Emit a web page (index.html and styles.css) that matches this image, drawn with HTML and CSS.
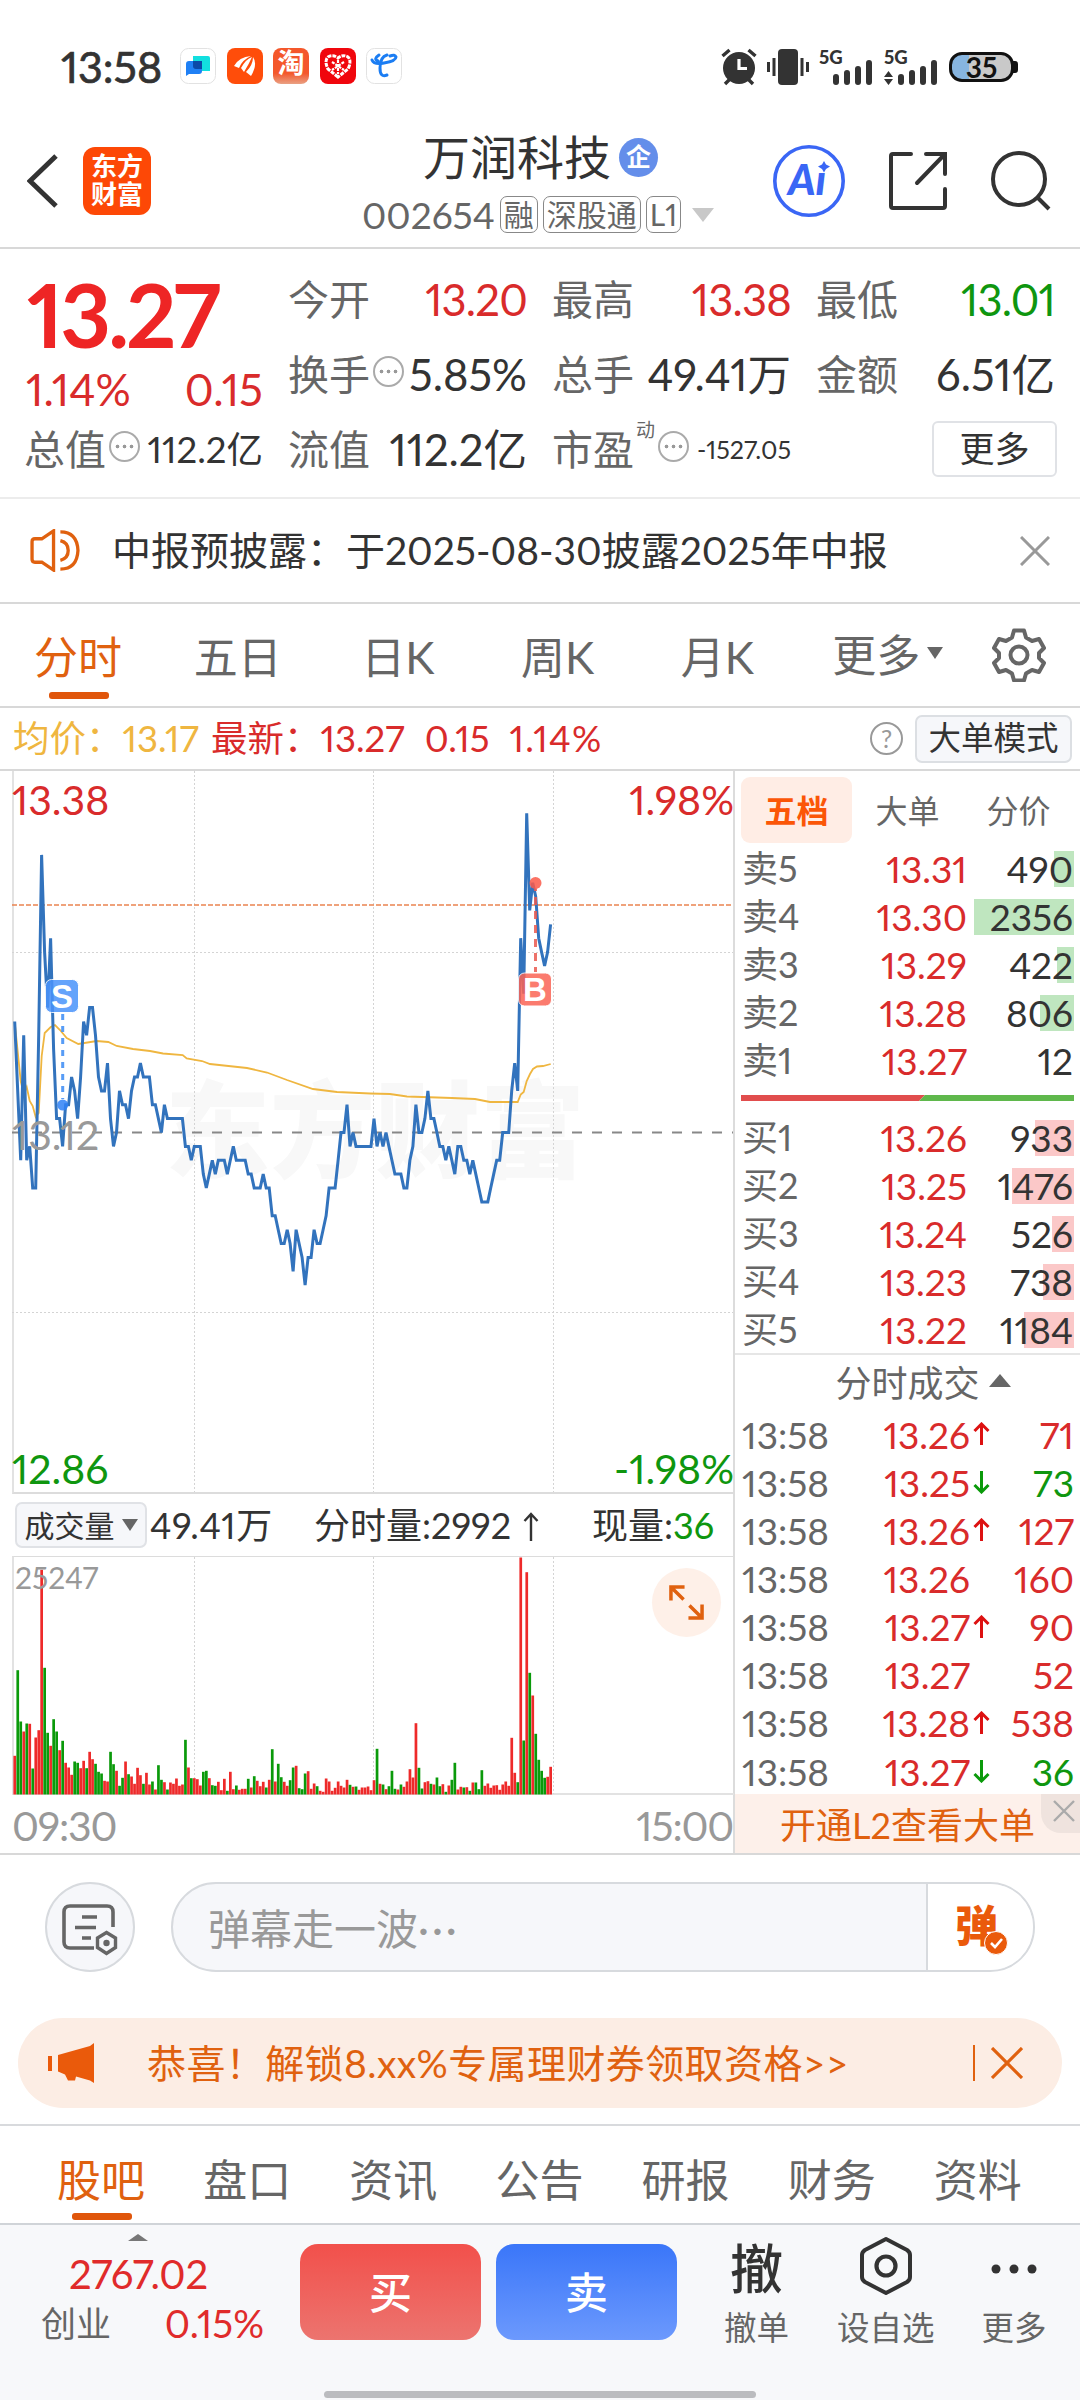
FILE: index.html
```
<!DOCTYPE html>
<html lang="zh-CN">

<head>
    <meta charset="UTF-8">
    <meta name="viewport" content="width=device-width, initial-scale=1.0">
    <title>万润科技 002654</title>
    <link rel="stylesheet" href="styles.css">
</head>

<body>
    <!-- 状态栏 -->
    <div class="status-bar">
        <span class="clock">13:58</span>
        <div class="app-icons">
            <svg viewBox="0 0 36 36"><rect x=".5" y=".5" width="35" height="35" rx="8" fill="#fff" stroke="#e2e2e2"/><path d="M13 8h15q2 0 2 2v13H16q-3 0-3-3z" fill="#12dfdf"/><path d="M9 13h13v10q0 3-3 3H9l-3 2V16q0-3 3-3z" fill="#1f80f5"/><path d="M13 13h9v8h-6q-3 0-3-3z" fill="#0b49a8"/></svg>
            <svg viewBox="0 0 36 36"><rect width="36" height="36" rx="8" fill="#ff4d0a"/><path d="M7 18Q12 9 24 8 15 12 12 20zM14 20Q19 11 25 9 22 16 17 24zM19 24Q26 17 26 9 31 16 24 28z" fill="#fff"/></svg>
            <span class="app-tao">淘</span>
            <svg viewBox="0 0 36 36"><rect width="36" height="36" rx="8" fill="#f0060d"/><path d="M18 29L8 21Q4 13 8 9q5-3 10 1 5-4 10-1 4 4 0 12z" fill="none" stroke="#fff" stroke-width="3" stroke-dasharray="4 1"/><path d="M12 14l12 8M24 14l-12 8M18 12v14" stroke="#fff" stroke-width="2.200" stroke-dasharray="3 1"/></svg>
            <svg viewBox="0 0 36 36"><rect x=".5" y=".5" width="35" height="35" rx="8" fill="#fff" stroke="#e2e2e2"/><path d="M6 12q2 5 12 3 12-2 12-6-1-3-6-1M21 7q-7 2-7 13 0 10 7 7M13 7q-6 4-1 6" fill="none" stroke="#1b7df3" stroke-width="3" stroke-linecap="round"/></svg>
        </div>
        <div class="sys-icons">
            <svg class="alarm" viewBox="0 0 36 38"><circle cx="18" cy="20" r="16" fill="#333"/><path d="M1.500 8l7-6M34.500 8l-7-6M4 36l5-5M32 36l-5-5" stroke="#333" stroke-width="3.400"/><path d="M18 11v9.500h8" fill="none" stroke="#fff" stroke-width="3.200"/></svg>
            <svg class="vibrate" viewBox="0 0 42 38"><rect x="11" y="1" width="20" height="36" rx="4" fill="#333"/><path d="M1.500 14v10M7 10v18M35 10v18M40.500 14v10" stroke="#333" stroke-width="3"/></svg>
            <div class="signal"><b>5G</b><svg viewBox="0 0 54 36"><path d="M17 33v-5M28 33v-9M39 33V20M50 33V14" stroke="#333" stroke-width="6" stroke-linecap="round"/></svg></div>
            <div class="signal"><b>5G</b><svg viewBox="0 0 54 36"><path d="M17 33v-5M28 33v-9M39 33V20M50 33V14" stroke="#333" stroke-width="6" stroke-linecap="round"/><path d="M0 28h9l-4.500-6zM0 30h9l-4.500 6z" fill="#333"/></svg></div>
            <div class="battery"><span>35</span></div>
        </div>
    </div>

    <!-- 标题栏 -->
    <div class="header">
        <svg class="back" viewBox="0 0 32 56"><path d="M29 3L3 28l26 25" fill="none" stroke="#333" stroke-width="5"/></svg>
        <div class="logo">东方<br>财富</div>
        <div class="title">
            <div class="name">万润科技<i>企</i></div>
            <div class="code">002654<em>融</em><em>深股通</em><em>L1</em><u></u></div>
        </div>
        <svg class="ai" viewBox="0 0 72 72"><circle cx="36" cy="36" r="34.200" fill="none" stroke="#3a66f5" stroke-width="3.600"/><text x="15" y="50">Aı</text><path d="M51 16l2 3.500 4 2-4 2.500-2 3.500-2-3.500-4-2.500 4-2z" fill="#3a66f5"/></svg>
        <svg class="share" viewBox="0 0 60 60"><path d="M23 3H5q-2 0-2 2v50q0 2 2 2h50q2 0 2-2V38M38 3h19v20M57 3L29 32" fill="none" stroke="#333" stroke-width="4" stroke-linecap="round"/></svg>
        <svg class="search" viewBox="0 0 60 60"><circle cx="28" cy="28" r="26" fill="none" stroke="#333" stroke-width="4"/><path d="M46 46l12 12" stroke="#333" stroke-width="4"/></svg>
    </div>

    <!-- 行情 -->
    <div class="quote">
        <div class="main-price">
            <div class="price">13.27</div>
            <div class="change"><span>1.14%</span><span>0.15</span></div>
        </div>
        <div class="cell"><label>今开</label><b class="up">13.20</b></div>
        <div class="cell"><label>最高</label><b class="up">13.38</b></div>
        <div class="cell"><label>最低</label><b class="down">13.01</b></div>
        <div class="cell"><label>换手</label><i class="tip"></i><b>5.85%</b></div>
        <div class="cell"><label>总手</label><b>49.41万</b></div>
        <div class="cell"><label>金额</label><b>6.51亿</b></div>
        <div class="cell"><label>总值</label><i class="tip"></i><b class="mid">112.2亿</b></div>
        <div class="cell"><label>流值</label><b>112.2亿</b></div>
        <div class="cell"><label>市盈</label><sup>动</sup><i class="tip"></i><b class="small">-1527.05</b></div>
        <div class="cell"><button class="more-btn">更多</button></div>
    </div>

    <!-- 公告 -->
    <div class="notice">
        <svg class="speaker" viewBox="0 0 52 44"><path d="M24 2L12 10H5q-3 0-3 3v18q0 3 3 3h7l12 8zM31 3q17 0 18 19-1 19-18 19M31 12q8 2 8 10t-8 10" fill="none" stroke="#e0610f" stroke-width="3.400"/></svg>
        <span>中报预披露：于2025-08-30披露2025年中报</span>
        <svg class="close" viewBox="0 0 30 30"><path d="M1 1l28 28M29 1L1 29" stroke="#999" stroke-width="3"/></svg>
    </div>

    <!-- 周期 -->
    <div class="period">
        <span class="on">分时</span><span>五日</span><span>日K</span><span>周K</span><span>月K</span><span class="drop">更多<u></u></span>
        <svg viewBox="0 0 54 54"><path d="M22 2.500h10l2 7 6 3.500 7-2 5 9-5 5v5l5 5-5 9-7-2-6 3.500-2 7H22l-2-7-6-3.500-7 2-5-9 5-5v-5l-5-5 5-9 7 2 6-3.500z" fill="none" stroke="#666" stroke-width="4" stroke-linejoin="round"/><circle cx="27" cy="27" r="8.500" fill="none" stroke="#666" stroke-width="4"/></svg>
    </div>

    <div class="info">
        <span class="avg">均价：13.17</span>
        <span class="last">最新：13.27</span>
        <span class="last">0.15</span>
        <span class="last pct">1.14%</span>
        <i class="help">?</i>
        <button>大单模式</button>
    </div>

    <div class="main">
        <!-- 分时图 -->
        <div class="charts">
            <div class="price-chart">
                <svg id="priceSvg" viewBox="0 0 722 722"></svg>
                <span class="tl up">13.38</span>
                <span class="tr up">1.98%</span>
                <span class="ml">13.12</span>
                <span class="bl down">12.86</span>
                <span class="br down">-1.98%</span>
            </div>
            <div class="vol-head">
                <button>成交量<u></u></button>
                <span class="total">49.41万</span>
                <span class="minute">分时量:2992<svg viewBox="0 0 16 30"><path d="M8 29V2M1.500 9L8 2l6.500 7" fill="none" stroke="#333" stroke-width="2.400"/></svg></span>
                <span class="now">现量:<b class="down">36</b></span>
            </div>
            <div class="vol-chart">
                <svg id="volSvg" viewBox="0 0 722 238"></svg>
                <span class="max">25247</span>
                <i class="full"><svg viewBox="0 0 36 36"><path d="M2 16V2h14M3 3l12 12M34 20v14H20M33 33L21 21" fill="none" stroke="#e0610f" stroke-width="3.600"/></svg></i>
            </div>
            <div class="times"><span>09:30</span><span>15:00</span></div>
        </div>

        <!-- 五档 + 成交明细 -->
        <div class="side">
            <div class="side-tabs"><span class="on">五档</span><span>大单</span><span>分价</span></div>
            <div id="asks" class="book"></div>
            <div class="ratio"><svg viewBox="0 0 333 6"><path d="M0 0h184l-6 6H0z" fill="#e14d4d"/><path d="M184 0h149v6H178z" fill="#5fb84c"/></svg></div>
            <div id="bids" class="book"></div>
            <div class="ticks-head">分时成交<u></u></div>
            <div id="ticks" class="ticks"></div>
            <div class="l2">开通L2查看大单<i><svg viewBox="0 0 22 22"><path d="M1 1l20 20M21 1L1 21" stroke="#aaa" stroke-width="2.400"/></svg></i></div>
        </div>
    </div>

    <!-- 弹幕 -->
    <div class="danmu">
        <div class="round"><svg viewBox="0 0 56 52"><path d="M32 44H8q-6 0-6-6V8q0-6 6-6h37q6 0 6 6v15" fill="none" stroke="#666" stroke-width="3.600"/><path d="M20 13h15M13 23.500h21M20 34h9" stroke="#666" stroke-width="3.600"/><path d="M44.500 28.500l9 5.500v9.500l-9 6-9-6V34z" fill="#f6f7fa" stroke="#666" stroke-width="3.400"/><circle cx="44.500" cy="39" r="3.200" fill="#666"/></svg></div>
        <div class="input"><span>弹幕走一波<s>···</s></span><div class="send">弹<svg viewBox="0 0 24 24"><circle cx="12" cy="12" r="11.500" fill="#ea5a0b" stroke="#fff"/><path d="M7 12l4 4 7-8" fill="none" stroke="#fff" stroke-width="2.600"/></svg></div></div>
    </div>

    <div class="promo">
        <svg class="horn" viewBox="0 0 46 40"><path d="M46 0v40l-4-2.500-14-4-1 4h-7l-3-6-7-3V12L42 3zM0 13h4v15H0z" fill="#ea5a0b"/></svg>
        <span>恭喜！解锁8.xx%专属理财券领取资格&gt;&gt;</span>
        <svg class="close" viewBox="0 0 32 32"><path d="M1 1l30 30M31 1L1 31" stroke="#e0610f" stroke-width="3.200"/></svg>
    </div>

    <div class="sections">
        <span class="on">股吧</span><span>盘口</span><span>资讯</span><span>公告</span><span>研报</span><span>财务</span><span>资料</span>
    </div>

    <!-- 底部操作栏 -->
    <div class="footer">
        <div class="index">
            <u></u>
            <div class="point">2767.02</div>
            <div class="row"><span>创业</span><b>0.15%</b></div>
        </div>
        <button class="buy">买</button>
        <button class="sell">卖</button>
        <div class="act a1"><strong>撤</strong><span>撤单</span></div>
        <div class="act a2"><svg viewBox="0 0 54 60"><path d="M27 3l21 11q3 2 3 5v22q0 3-3 5L27 57 6 46q-3-2-3-5V19q0-3 3-5z" fill="none" stroke="#333" stroke-width="4" stroke-linejoin="round"/><circle cx="27" cy="30" r="9.500" fill="none" stroke="#333" stroke-width="4.200"/></svg><span>设自选</span></div>
        <div class="act a3"><svg viewBox="0 0 46 60"><g fill="#333"><circle cx="5" cy="33" r="4.500"/><circle cx="23" cy="33" r="4.500"/><circle cx="41" cy="33" r="4.500"/></g></svg><span>更多</span></div>
        <div class="home"></div>
    </div>

    <script src="chart.js"></script>
</body>

</html>
```
FILE: chart.js
```
/**************** 数据 ****************/
// 每分钟价格，相对昨收 13.12 的分数
const PRICES = [
    8, 3, -2, 7, -2, -1, -4, -4, 7, 20, 13, 9, 14, 6, 1, 1, -1, 2, 2, 4,
    3, 1, 4, 8, 7, 9, 9, 7, 4, 3, 3, 5, 1, -1, 0, 3, 2, 2, 1, 3,
    4, 4, 5, 4, 4, 4, 2, 2, 1, 0, 2, 1, 1, 1, 1, 1, 1, -1, -1, -2,
    -1, -1, -1, -3, -4, -3, -2, -3, -2, -2, -2, -3, -2, -1, -2, -2, -2, -2, -3, -3,
    -4, -4, -4, -3, -4, -4, -6, -6, -7, -8, -8, -7, -8, -10, -7, -8, -9, -11, -9, -9,
    -7, -8, -8, -7, -6, -4, -4, -4, -2, 0, 0, 2, -1, 0, -1, -1, -1, -1, -1, -1,
    1, -1, 0, -1, 0, -1, -2, -3, -3, -3, -4, -4, -2, -1, 2, 0, 0, 1, 3, 1,
    1, 0, -1, -1, -2, -1, -2, -3, -1, -1, -2, -2, -3, -2, -3, -4, -5, -5, -5, -4,
    -3, -2, -2, 0, 0, 0, 3, 5, 3, 14, 10, 23, 16, 18, 17, 14, 13, 12, 13, 15
];

// 均价线
const AVG = '2.7,251 8.7,310 11.7,323 14.7,316 17.7,330 20.7,335 23.7,346 26.7,342 29.7,285 32.7,262 38.7,256 43,254 48,259 54.7,267 66.3,273 84.7,270 96.3,271 104.7,275 121,278 138,280 151,282.500 170.7,284 174.7,287.500 190,290 198,293 235,297 255,301.500 275,309 301,318 325,321 358,322.500 378,323 395,325.500 440,327 463,328 478,331 505.7,331 508.7,323.500 511.7,321 514.7,310 518,303 521,298 525,295.500 531,295 538.7,293';

// 成交量，r 涨 g 跌
const VOLUMES = `r116 g373 g219 r189 g213 r212 g78 r171 r193 r674 g380 g185 r146 g226 g189 r133 g161 r95 r81 r59
g99 g95 r79 r101 g79 r128 r106 g92 g68 g63 r41 r39 g128 g91 r71 g26 g50 r99 g61 r54
r32 r80 r58 g32 r65 r30 g39 r15 g88 g44 r37 g15 r36 r32 r48 r26 r30 g164 r81 g49
r49 r46 r27 g68 g71 r49 g28 g26 r38 r13 r47 g11 r68 r16 g27 r14 r17 r17 g47 r21
g55 r41 r25 r38 g21 r44 g136 r39 g92 g52 r38 r26 g43 g81 r86 g19 g16 g63 r70 r17
r33 g25 r11 r8 r48 r39 r11 r20 r39 r26 r21 r44 g29 r23 g24 r14 r21 r21 r24 r13
r43 g137 r32 g30 r16 g25 g71 g17 r15 g30 r23 r39 r76 r51 r214 g80 g18 r37 r40 g32
r30 g51 g25 r31 g8 r27 g44 g95 r15 r23 g21 r22 g11 r36 g36 g16 g73 r26 r33 r20
r27 r28 r14 r30 r39 r26 r170 r65 g37 r711 g162 r667 g365 r297 g182 g104 g71 g50 r53 r83`.split(/\s+/);

const ASKS = [['卖5', '13.31', 490, 20], ['卖4', '13.30', 2356, 100], ['卖3', '13.29', 422, 17], ['卖2', '13.28', 806, 34], ['卖1', '13.27', 12, 0]];
const BIDS = [['买1', '13.26', 933, 39], ['买2', '13.25', 1476, 62], ['买3', '13.24', 526, 22], ['买4', '13.23', 738, 31], ['买5', '13.22', 1184, 50]];
const TICKS = [['13.26', 'up', 71], ['13.25', 'down', 73], ['13.26', 'up', 127], ['13.26', '', 160], ['13.27', 'up', 90], ['13.27', '', 52], ['13.28', 'up', 538], ['13.27', 'down', 36]];

/**************** 分时图 ****************/
const STEP = 2.994;
const xOf = i => 2.7 + i * STEP;
const yOf = c => 361.5 - c * 13.88;

const grid = (h, y0 = 0) => [182.5, 361.5, 541.5].map(x => `<path class="grid" d="M${x} ${y0}V${h}"/>`).join('');

document.getElementById('priceSvg').innerHTML = `
    <text class="mark" x="363" y="398" text-anchor="middle">东方财富</text>
    ${grid(721)}
    <path class="grid" d="M0 181.500H721M0 541.500H721"/>
    <path d="M0 134H721" stroke="#ea8450" stroke-width="1.600" stroke-dasharray="5 2"/>
    <path d="M0 361.500H721" stroke="#888" stroke-width="2" stroke-dasharray="10 10"/>
    <polyline points="${AVG}" fill="none" stroke="#efb640" stroke-width="1.800"/>
    <polyline points="${PRICES.map((c, i) => xOf(i).toFixed(1) + ',' + yOf(c).toFixed(1)).join(' ')}" fill="none" stroke="#3273bd" stroke-width="3"/>
    <g opacity=".85">
        <path d="M50.700 243V328" stroke="#3a8bf5" stroke-width="3" stroke-dasharray="6 6"/>
        <circle cx="50.700" cy="334" r="5.500" fill="#2f82f7"/>
        <rect x="33.500" y="208.500" width="33" height="33" rx="6" fill="#4a93fb" stroke="#fff"/>
    </g>
    <g opacity=".85">
        <path d="M523.500 112V201" stroke="#ea5a50" stroke-width="3" stroke-dasharray="8 6"/>
        <circle cx="523.500" cy="112" r="6" fill="#fb5a4a"/>
        <rect x="506.500" y="202" width="33" height="33" rx="6" fill="#fb6455" stroke="#fff"/>
    </g>
    <text class="flag" x="50" y="236.500" text-anchor="middle">S</text>
    <text class="flag" x="523" y="230" text-anchor="middle">B</text>`;

/**************** 成交量 ****************/
document.getElementById('volSvg').innerHTML = grid(237) + VOLUMES.map((v, i) => {
    const h = v.slice(1) / 3;
    return `<rect x="${(xOf(i) - 1.3).toFixed(1)}" y="${(237.5 - h).toFixed(1)}" width="2.700" height="${h.toFixed(1)}" fill="${v[0] === 'r' ? '#ee2a2a' : '#0a9a0a'}"/>`;
}).join('');

/**************** 盘口 ****************/
const bookRow = ([name, price, n, w]) => `
    <div class="book-row"><span>${name}</span><b>${price}</b><em><i style="width:${w}px"></i>${n}</em></div>`;
document.getElementById('asks').innerHTML = ASKS.map(bookRow).join('');
document.getElementById('bids').innerHTML = BIDS.map(bookRow).join('');

const arrow = d => `<svg viewBox="0 0 17 24">${d ? `<path d="${d === 'up' ? 'M8.5 23V2M1.500 9l7-7 7 7' : 'M8.500 1v21M1.500 15l7 7 7-7'}" fill="none" stroke="${d === 'up' ? '#dd1111' : '#0a9a0a'}" stroke-width="3"/>` : ''}</svg>`;
document.getElementById('ticks').innerHTML = TICKS.map(([price, dir, n]) => `
    <div class="tick"><span>13:58</span><b>${price}</b>${arrow(dir)}<em class="${dir === 'down' ? 'down' : 'up'}">${n}</em></div>`).join('');
```
FILE: styles.css
```
* {
    margin: 0;
    padding: 0;
    box-sizing: border-box
}

body {
    width: 1080px;
    height: 2400px;
    overflow: hidden;
    background: #fff;
    color: #333;
    font-family: Lato, "Noto Sans CJK SC", sans-serif;
    font-variant-numeric: proportional-nums;
    line-height: 1;
    white-space: nowrap
}

i, em, u, s {
    font-style: normal;
    text-decoration: none
}

b {
    font-weight: 400
}

svg {
    display: block;
    flex: none
}

button {
    font: inherit;
    color: #333;
    border: 1px solid #e0e2e6
}

.up {
    color: #d92b2b
}

.down {
    color: #0f960f
}

/* 状态栏 */
.status-bar {
    height: 88px;
    padding: 45px 66px 0 61px;
    display: flex;
    align-items: flex-start
}

.clock {
    width: 119px;
    font-size: 43px;
    -webkit-text-stroke: .7px #333
}

.app-icons {
    display: flex;
    gap: 10.500px;
    padding-top: 3px
}

.app-icons svg,
.app-tao {
    width: 36px;
    height: 36px
}

.app-tao {
    border-radius: 8px;
    background: linear-gradient(#f4572b 70%, #e9a184);
    color: #fff;
    font-size: 27px;
    font-weight: 700;
    line-height: 30px;
    text-align: center
}

.sys-icons {
    display: flex;
    margin: 3px 0 0 auto
}

.alarm {
    width: 36px;
    height: 38px
}

.vibrate {
    width: 42px;
    height: 38px;
    margin: 0 10px
}

.signal {
    width: 54px;
    margin-right: 11px;
    height: 38px;
    position: relative
}

.signal b {
    position: absolute;
    font-size: 18.500px;
    font-weight: 900
}

.signal svg {
    width: 54px;
    height: 38px
}

.battery {
    position: relative;
    width: 65px;
    height: 30px;
    margin-top: 4px;
    border: 3px solid #111;
    border-radius: 13px;
    background: linear-gradient(90deg, #87b5e0 28%, #c9c9c9 28%);
    text-align: center;
    font-size: 28px;
    font-weight: 700;
    color: #111;
    line-height: 24px
}

.battery::after {
    content: '';
    position: absolute;
    right: -7px;
    top: 6px;
    width: 5px;
    height: 12px;
    border-radius: 0 3px 3px 0;
    background: #111
}

/* 标题栏 */
.header {
    height: 161px;
    padding: 0 27px;
    border-bottom: 2px solid #d8d8d8;
    display: flex;
    align-items: center
}

.header .back {
    width: 32px;
    height: 56px;
    margin-top: 27px
}

.logo {
    width: 68px;
    height: 68px;
    margin: 27px 0 0 24px;
    padding-top: 5px;
    border-radius: 12px;
    background: #fd4806;
    color: #fff;
    font-size: 26px;
    font-weight: 700;
    line-height: 28px;
    text-align: center
}

.title {
    width: 400px;
    margin: 36px 0 0 211px
}

.name {
    display: flex;
    align-items: center;
    padding-left: 61px;
    font-size: 47px;
    height: 58px
}

.name i {
    width: 39px;
    height: 39px;
    margin-left: 8px;
    border-radius: 50%;
    background: #648eea;
    color: #fff;
    font-size: 25px;
    font-weight: 700;
    line-height: 37px;
    text-align: center
}

.code {
    height: 57px;
    display: flex;
    align-items: center;
    font-size: 37px;
    color: #666
}

.code em {
    height: 37px;
    margin-left: 5px;
    padding: 0 3px;
    border: 1.500px solid #888;
    border-radius: 7px;
    font-size: 30px;
    line-height: 34px
}

.code u,
.drop u,
.vol-head u {
    border: 8px solid transparent;
    border-top: 12px solid #666;
    border-bottom: 0
}

.code u {
    margin-left: 11px;
    border-width: 14px 11px 0;
    border-top-color: #c8c8c8
}

.header .ai {
    width: 72px;
    height: 72px;
    margin: 27px 0 0 11px
}

.ai text {
    font: italic 900 42px Lato, sans-serif;
    fill: #3a66f5
}

.share,
.search {
    width: 60px;
    height: 60px;
    margin: 27px 0 0 43px
}

/* 行情 */
.quote {
    height: 250px;
    padding: 13px 26px 11px;
    border-bottom: 2px solid #ececec;
    display: grid;
    grid-template-columns: repeat(4, 237px);
    grid-template-rows: repeat(3, 75px);
    column-gap: 27px
}

.main-price {
    grid-row: span 2;
    padding-top: 8px;
    color: #ee2525
}

.price {
    padding-left: 1px;
    font-size: 88px;
    font-weight: 700;
    letter-spacing: -3px
}

.change {
    display: flex;
    justify-content: space-between;
    margin-top: 9px;
    font-size: 44px;
    color: #d92b2b
}

.cell {
    display: flex;
    align-items: center;
    font-size: 41px
}

.cell label {
    margin-left: -2px;
    color: #666
}

.cell b {
    margin-left: auto;
    font-size: 43.500px
}

.cell .up,
.cell .down {
    letter-spacing: -.8px
}

.cell .mid {
    font-size: 36.500px
}

.cell .small {
    font-size: 25px
}

.cell sup {
    align-self: flex-start;
    margin: 8px 0 0 2px;
    font-size: 19px;
    color: #666
}

.tip {
    width: 31px;
    height: 31px;
    margin: -6px 0 0 3px;
    border: 2px solid #aaa;
    border-radius: 50%;
    background: radial-gradient(circle, #999 1.500px, transparent 2.200px) 50% 50% / 7px 27px content-box;
    padding: 0 3px
}

.more-btn {
    width: 125px;
    height: 56px;
    margin: -2px -2px 0 auto;
    border-width: 2px;
    border-radius: 6px;
    background: #fff;
    font-size: 35px
}

/* 公告 */
.notice {
    height: 105px;
    padding: 0 30px;
    border-bottom: 2px solid #d8d8d8;
    display: flex;
    align-items: center;
    font-size: 39px
}

.speaker {
    width: 51px;
    height: 43px;
    margin-right: 31px
}

.notice .close {
    width: 30px;
    height: 30px;
    margin-left: auto
}

/* 周期 */
.period {
    height: 104px;
    padding: 0 34px;
    border-bottom: 2px solid #d8d8d8;
    display: flex;
    align-items: center;
    font-size: 44px;
    color: #666
}

.period span {
    width: 160px;
    height: 104px;
    line-height: 108px
}

.period span:nth-child(3) {
    padding-left: 8px
}

.period span:nth-child(4) {
    padding-left: 8px
}

.period span:nth-child(5) {
    padding-left: 8px
}

.period .drop {
    display: flex;
    align-items: center
}

.drop u {
    margin: -4px 0 0 7px
}

.period svg {
    width: 54px;
    height: 54px
}

.on {
    position: relative;
    color: #e0610f
}

.period .on::after,
.sections .on::after {
    content: '';
    position: absolute;
    left: 15px;
    bottom: 8px;
    width: 60px;
    height: 7px;
    border-radius: 3px;
    background: #e0560b
}

.info {
    height: 63px;
    padding: 0 8px 0 13px;
    border-bottom: 2px solid #d8d8d8;
    display: flex;
    align-items: center;
    font-size: 36.500px
}

.avg {
    width: 198px;
    color: #efb640
}

.last {
    margin-right: 20px;
    color: #d92b2b
}

.pct {
    letter-spacing: 1.200px
}

.help {
    width: 33px;
    height: 33px;
    margin-left: auto;
    border: 2.500px solid #999;
    border-radius: 50%;
    color: #999;
    font-size: 25px;
    line-height: 28px;
    text-align: center
}

.info button {
    width: 157px;
    height: 48px;
    margin-left: 12px;
    border: 2px solid #dcdfe3;
    border-radius: 7px;
    background: #f6f7fa;
    font-size: 32.500px
}

/* 图表 */
.main {
    height: 1084px;
    border-bottom: 2px solid #d8d8d8;
    display: flex
}

.charts {
    width: 735px;
    padding-left: 12px;
    border-right: 2px solid #dcdcdc
}

.price-chart {
    position: relative;
    width: 722px;
    height: 723px;
    border-bottom: 2px solid #dcdcdc;
    border-left: 2px solid #e2e2e2
}

.price-chart>svg,
.vol-chart>svg {
    width: 722px;
    margin-left: -2px
}

.grid {
    stroke: #d4d4d4;
    stroke-width: 1;
    stroke-dasharray: 2 2
}

.mark {
    font-size: 105px;
    font-weight: 900;
    fill: #f8f8f8
}

.flag {
    font: 700 33px "Liberation Sans", sans-serif;
    fill: #fff
}

.price-chart span {
    position: absolute;
    font-size: 41px
}

.tl {
    left: -2px;
    top: 8px
}

.tr {
    right: 0;
    top: 8px
}

.ml {
    left: -2px;
    top: 343px;
    color: #999
}

.bl {
    left: -2px;
    bottom: 3px
}

.br {
    right: 0;
    bottom: 3px
}

.vol-head {
    height: 62px;
    padding-left: 3px;
    display: flex;
    align-items: center;
    font-size: 36px
}

.vol-head button {
    width: 132px;
    height: 46px;
    margin-right: 3px;
    border-width: 2px;
    border-radius: 7px;
    background: #f6f7fa;
    display: flex;
    align-items: center;
    justify-content: center;
    font-size: 30px
}

.vol-head u {
    margin-left: 7px
}

.total {
    width: 164px;
    letter-spacing: .7px
}

.minute {
    width: 278px;
    display: flex
}

.minute svg {
    width: 16px;
    height: 30px;
    margin: 5px 0 0 12px
}

.vol-chart {
    position: relative;
    width: 722px;
    height: 239px;
    border-top: 1px solid #dcdcdc;
    border-bottom: 2px solid #e2e2e2;
    border-left: 2px solid #e2e2e2
}

.max {
    position: absolute;
    left: 1px;
    top: 5px;
    font-size: 30px;
    color: #999
}

.full {
    position: absolute;
    left: 638px;
    top: 11px;
    width: 69px;
    height: 69px;
    border-radius: 50%;
    background: #fef0e8;
    padding: 17px
}

.times {
    display: flex;
    justify-content: space-between;
    padding: 10px 0;
    font-size: 41px;
    letter-spacing: -1.200px;
    color: #999
}

/* 右侧 */
.side {
    flex: 1;
    padding-left: 6px;
    font-size: 37px
}

.side-tabs {
    display: flex;
    padding-top: 6px;
    height: 73px;
    font-size: 32px;
    color: #666
}

.side-tabs span {
    width: 111px;
    height: 66px;
    line-height: 68px;
    text-align: center
}

.side-tabs .on {
    border-radius: 9px;
    background: #ffede5;
    color: #fb5607;
    font-weight: 700
}

.book-row {
    height: 48px;
    padding: 0 7px 0 1px;
    display: grid;
    grid-template-columns: 95px 130px 1fr;
    align-items: center
}

.book-row span {
    font-size: 36px;
    color: #666
}

.book-row b,
.tick b {
    text-align: right;
    color: #d92b2b
}

.book-row em {
    position: relative;
    height: 36px;
    text-align: right;
    z-index: 0
}

.book-row em i {
    position: absolute;
    top: 1px;
    right: -1px;
    height: 36px;
    z-index: -1
}

#asks i {
    background: #bfe6bf
}

#bids i {
    background: #fbc8c8
}

.ratio {
    height: 28px;
    padding-top: 10px
}

.ratio svg {
    width: 333px;
    height: 6px
}

#asks {
    height: 241px
}

#bids {
    height: 240px
}

.ticks-head {
    height: 57px;
    margin-left: -6px;
    padding-left: 31px;
    border-top: 2px solid #e6e6e6;
    display: flex;
    align-items: center;
    justify-content: center;
    font-size: 36px;
    color: #666
}

.ticks-head u {
    margin: -4px 0 0 9px;
    border: 11px solid transparent;
    border-bottom: 13px solid #666;
    border-top: 0
}

.ticks {
    height: 384px
}

.tick {
    height: 48.150px;
    padding: 0 6px 0 1px;
    display: grid;
    grid-template-columns: 95px 133px 20px 1fr;
    align-items: center
}

.tick span {
    color: #666
}

.tick svg {
    width: 17px;
    height: 24px;
    margin-left: 3px
}

.tick em {
    text-align: right
}

.l2 {
    position: relative;
    height: 59px;
    margin-left: -6px;
    background: #fdf0ea;
    color: #e0610f;
    text-align: center;
    font-size: 36px;
    line-height: 62px
}

.l2 i {
    position: absolute;
    right: 0;
    top: 0;
    width: 39px;
    height: 39px;
    padding: 6px 5px 0 12px;
    border-bottom-left-radius: 20px;
    background: #efe3de
}

/* 弹幕 */
.danmu {
    height: 163px;
    padding: 27px 45px 0;
    display: flex;
    justify-content: space-between
}

.round {
    width: 90px;
    height: 90px;
    border: 2px solid #d7dade;
    border-radius: 50%;
    background: #f6f7fa;
    padding: 20px 15px
}

.input {
    width: 864px;
    height: 90px;
    border: 2px solid #d7dade;
    border-radius: 45px;
    background: #f6f7fa;
    overflow: hidden;
    display: flex;
    align-items: center;
    justify-content: space-between;
    padding-left: 35px;
    font-size: 42px;
    color: #999
}

.input span {
    padding-top: 3px
}

.input s {
    letter-spacing: 3px
}

.send {
    position: relative;
    width: 107px;
    height: 86px;
    padding-left: 27px;
    border-left: 2px solid #d7dade;
    background: #fff;
    color: #ea5a0b;
    font-weight: 900;
    font-size: 43px;
    line-height: 84px
}

.send svg {
    position: absolute;
    left: 56px;
    top: 47px;
    width: 24px
}

.promo {
    height: 90px;
    margin: 0 18px;
    padding: 0 39px 0 30px;
    border-radius: 45px;
    background: #fcede4;
    display: flex;
    align-items: center;
    color: #e0610f;
    font-size: 39px;
    letter-spacing: .4px
}

.horn {
    width: 46px;
    height: 40px;
    margin-right: 53px
}

.promo .close {
    width: 50px;
    height: 36px;
    margin-left: auto;
    padding: 2px 0 2px 16px;
    border-left: 2px solid #e0610f
}

.sections {
    height: 101px;
    margin-top: 16px;
    padding-left: 57px;
    border-top: 2px solid #d8dadd;
    border-bottom: 2px solid #d0d4d8;
    display: flex;
    font-size: 44px;
    color: #666
}

.sections span {
    width: 146.300px;
    line-height: 108px
}

.sections .on::after {
    bottom: 3px
}

/* 底部 */
.footer {
    position: relative;
    height: 176px;
    padding-top: 19px;
    background: #f7f8fa;
    display: flex
}

.index {
    width: 300px;
    padding: 0 36px 0 41px;
    margin-top: -10px
}

.index>u {
    display: block;
    width: 0;
    margin: 0 auto 0 87px;
    border: 10px solid transparent;
    border-bottom: 7px solid #777;
    border-top: 0
}

.point {
    margin: 13px 0 0 28px;
    font-size: 40px;
    letter-spacing: -.3px;
    color: #e02b2b
}

.row {
    display: flex;
    justify-content: space-between;
    align-items: center;
    margin-top: 10px;
    font-size: 35px;
    color: #666
}

.row b {
    font-size: 38.500px;
    color: #e02b2b
}

.buy,
.sell {
    width: 181px;
    height: 96px;
    border: 0;
    border-radius: 18px;
    color: #fff;
    font-size: 43px;
    font-weight: 500
}

.buy {
    background: linear-gradient(#f2504b, #ec746f)
}

.sell {
    margin-left: 15px;
    background: linear-gradient(#3a76f9, #6c99fd)
}

.act {
    margin-top: -2px;
    display: flex;
    flex-direction: column;
    align-items: center;
    font-size: 32.500px;
    color: #666
}

.act strong {
    height: 60px;
    margin-bottom: 10px;
    font-size: 53px;
    font-weight: 500;
    line-height: 54px;
    color: #333
}

.act svg {
    height: 60px;
    margin: -6px 0 16px
}

.a1 {
    margin-left: 47px
}

.a2 {
    margin-left: 48px
}

.a3 {
    margin-left: 47px
}

.home {
    position: absolute;
    left: 324px;
    bottom: 3px;
    width: 432px;
    height: 7px;
    border-radius: 4px;
    background: #bbbcbf
}
```
